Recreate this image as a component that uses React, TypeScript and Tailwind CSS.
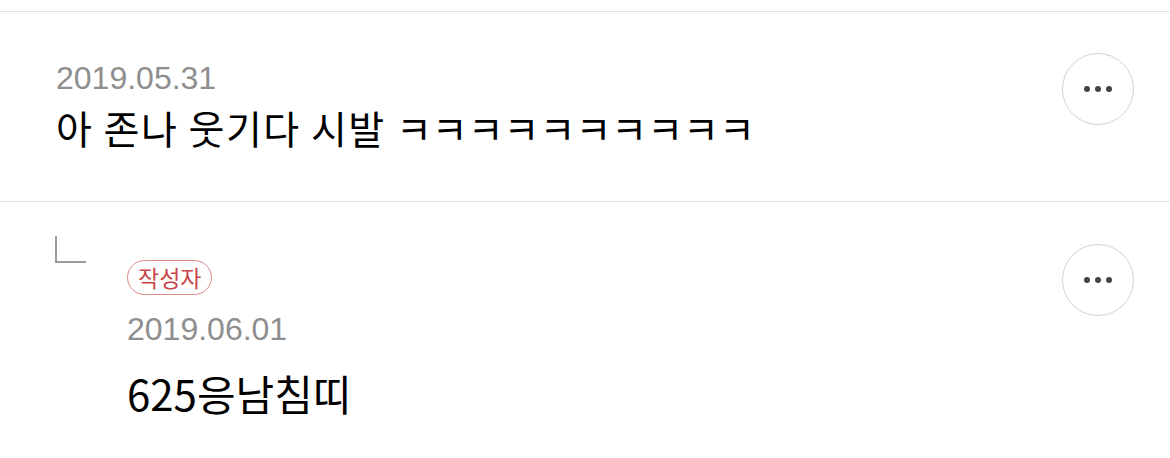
const sans = "font-['Liberation_Sans','Noto_Sans_CJK_KR',sans-serif]";
const kr = "font-['Noto_Sans_CJK_KR',sans-serif]";

function MoreButton() {
  return (
    <button className="w-[72px] h-[72px] rounded-full border-[1.5px] border-[#d2d2d2] bg-white flex items-center justify-center gap-[5px] shrink-0">
      <span className="w-[6px] h-[6px] rounded-full bg-[#444]" />
      <span className="w-[6px] h-[6px] rounded-full bg-[#444]" />
      <span className="w-[6px] h-[6px] rounded-full bg-[#444]" />
    </button>
  );
}

function ReplyMark() {
  return (
    <svg width="34" height="30" viewBox="0 0 34 30" className="shrink-0">
      <path d="M2 1 V27 H32" fill="none" stroke="#9b9b9b" strokeWidth="2" />
    </svg>
  );
}

export default function App() {
  return (
    <div className="w-[1170px] h-[458px] bg-white overflow-hidden">
      <div className="h-[12px] border-b border-[#e1e1e1]" />

      <div className="flex justify-between border-b border-[#e1e1e1] pl-[56px] pr-[36px] pt-[41px] h-[190px]">
        <div className="pt-[5px]">
          <div className={`${sans} text-[32px] leading-[40px] text-[#8e8e8e]`}>2019.05.31</div>
          <div className={`${kr} text-[39px] leading-[46px] tracking-[1.5px] text-black mt-[6px]`}>
            아 존나 웃기다 시발 <span className="tracking-normal">ㅋㅋㅋㅋㅋㅋㅋㅋㅋㅋ</span>
          </div>
        </div>
        <MoreButton />
      </div>

      <div className="flex justify-between pl-[54px] pr-[36px] pt-[33px]">
        <div className="flex">
          <ReplyMark />
          <div className="ml-[39px] pt-[25px]">
            <span className={`${kr} inline-flex items-center justify-center h-[35px] px-[10px] rounded-full border-[1.5px] border-[#dc8a88] text-[23px] leading-none text-[#c8464b]`}>
              작성자
            </span>
            <div className={`${sans} text-[32px] leading-[40px] text-[#8e8e8e] mt-[14px]`}>2019.06.01</div>
            <div className={`${kr} text-[42px] leading-[52px] text-black mt-[18px]`}>625응남침띠</div>
          </div>
        </div>
        <div className="pt-[9px]">
          <MoreButton />
        </div>
      </div>
    </div>
  );
}
